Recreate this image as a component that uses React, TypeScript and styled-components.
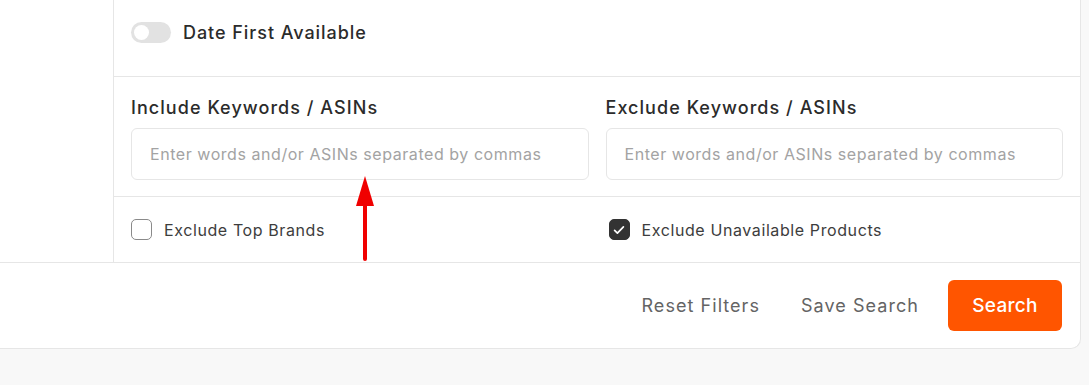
import React from "react"
import styled, { createGlobalStyle } from "styled-components"

const GlobalStyle = createGlobalStyle`
    html, body {
        margin: 0;
        padding: 0;
        background: #f8f8f8;
        font-family: Inter, "Noto Sans", sans-serif;
    }
    * { box-sizing: border-box; }
`

export default function App() {
    return (
        <>
            <GlobalStyle />
            <Page>
                <Card>
                    <Body>
                        <Sidebar />
                        <Panel>
                            <ToggleRow>
                                <Toggle />
                                <ToggleLabel>Date First Available</ToggleLabel>
                            </ToggleRow>
                            <KeywordGrid>
                                <Field>
                                    <FieldLabel>Include Keywords / ASINs</FieldLabel>
                                    <Input placeholder="Enter words and/or ASINs separated by commas" />
                                </Field>
                                <Field>
                                    <FieldLabel>Exclude Keywords / ASINs</FieldLabel>
                                    <Input placeholder="Enter words and/or ASINs separated by commas" />
                                </Field>
                            </KeywordGrid>
                            <CheckGrid>
                                <CheckItem>
                                    <Box />
                                    <span>Exclude Top Brands</span>
                                </CheckItem>
                                <CheckItem $shift>
                                    <Box $checked>
                                        <svg width="14" height="14" viewBox="0 0 14 14">
                                            <path d="M2.6 7.3l2.8 2.8 6-6.2" fill="none" stroke="#fff" strokeWidth="1.7" strokeLinecap="round" strokeLinejoin="round" />
                                        </svg>
                                    </Box>
                                    <span>Exclude Unavailable Products</span>
                                </CheckItem>
                            </CheckGrid>
                        </Panel>
                    </Body>
                    <Footer>
                        <TextButton>Reset Filters</TextButton>
                        <TextButton>Save Search</TextButton>
                        <SearchButton>Search</SearchButton>
                    </Footer>
                    <Arrow width="20" height="90" viewBox="0 0 20 90">
                        <path d="M10 1 L19 31 L1 31 Z" fill="#f00000" />
                        <rect x="8" y="28" width="4" height="58" rx="2" fill="#f00000" />
                    </Arrow>
                </Card>
            </Page>
        </>
    )
}

const Page = styled.div`
    width: 1089px;
    height: 385px;
    overflow: hidden;
`

const Card = styled.div`
    position: relative;
    width: 1081px;
    background: #fff;
    border-right: 1px solid #e6e6e6;
    border-bottom: 1px solid #e6e6e6;
    border-bottom-right-radius: 10px;
`

const Body = styled.div`
    display: flex;
`

const Sidebar = styled.div`
    width: 113px;
    flex-shrink: 0;
`

const Panel = styled.div`
    flex: 1;
    border-left: 1px solid #e6e6e6;
`

const ToggleRow = styled.div`
    height: 77px;
    display: flex;
    align-items: flex-start;
    gap: 12px;
    padding: 22px 17px 0;
    border-bottom: 1px solid #e6e6e6;
`

const Toggle = styled.div`
    position: relative;
    width: 40px;
    height: 21px;
    border-radius: 11px;
    background: #e2e2e2;
    &::after {
        content: "";
        position: absolute;
        left: 3px;
        top: 3px;
        width: 15px;
        height: 15px;
        border-radius: 50%;
        background: #fff;
    }
`

const ToggleLabel = styled.span`
    font-size: 18px;
    font-weight: 500;
    letter-spacing: 0.95px;
    color: #2b2b2b;
    line-height: 21px;
`

const KeywordGrid = styled.div`
    display: grid;
    grid-template-columns: 1fr 1fr;
    gap: 17px;
    padding: 20px 17px 16px;
    border-bottom: 1px solid #e6e6e6;
`

const Field = styled.div`
    display: flex;
    flex-direction: column;
    gap: 9px;
`

const FieldLabel = styled.label`
    font-size: 18px;
    font-weight: 500;
    letter-spacing: 1.05px;
    color: #2b2b2b;
    line-height: 22px;
`

const Input = styled.input`
    height: 52px;
    border: 1px solid #e6e6e6;
    border-radius: 6px;
    padding: 0 18px;
    font-family: inherit;
    font-size: 16px;
    letter-spacing: 0.55px;
    color: #333;
    outline: none;
    &::placeholder {
        color: #a3a3a3;
    }
`

const CheckGrid = styled.div`
    display: grid;
    grid-template-columns: 1fr 1fr;
    gap: 17px;
    height: 65px;
    align-items: center;
    padding: 0 17px;
`

const CheckItem = styled.div<{ $shift?: boolean }>`
    display: flex;
    align-items: center;
    gap: 12px;
    padding-left: ${p => (p.$shift ? "3px" : "0")};
    font-size: 16px;
    letter-spacing: 0.6px;
    color: #3d3d3d;
`

const Box = styled.div<{ $checked?: boolean }>`
    width: 21px;
    height: 21px;
    border-radius: 5px;
    display: flex;
    align-items: center;
    justify-content: center;
    border: 1.5px solid ${p => (p.$checked ? "#333" : "#8a8a8a")};
    background: ${p => (p.$checked ? "#333" : "#fff")};
`

const Footer = styled.div`
    display: flex;
    justify-content: flex-end;
    align-items: center;
    gap: 41px;
    height: 86px;
    padding-right: 18px;
    border-top: 1px solid #e6e6e6;
`

const TextButton = styled.button`
    border: none;
    background: none;
    padding: 0;
    font-family: inherit;
    font-size: 18px;
    letter-spacing: 1.05px;
    color: #646464;
`

const SearchButton = styled.button`
    border: none;
    width: 114px;
    height: 51px;
    margin-left: -12px;
    border-radius: 6px;
    background: #ff5500;
    color: #fff;
    font-family: inherit;
    font-size: 19px;
    font-weight: 500;
    letter-spacing: 0.3px;
`

const Arrow = styled.svg`
    position: absolute;
    left: 355px;
    top: 175px;
`
